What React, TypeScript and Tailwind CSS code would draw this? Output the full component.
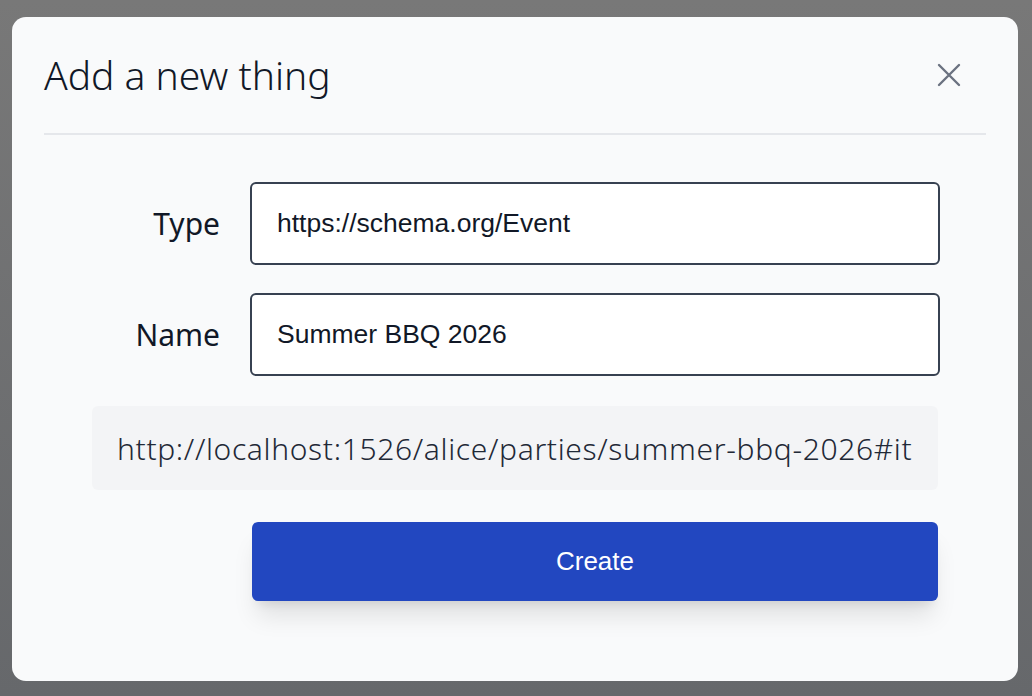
import { useState } from 'react';

const ubuntuLike = "font-['Noto_Sans','Open_Sans',sans-serif]";
const arialLike = "font-['Liberation_Sans',Arial,sans-serif]";

function CloseIcon() {
  return (
    <svg width="24" height="24" viewBox="0 0 24 24" fill="none" stroke="currentColor" strokeWidth="2.4" strokeLinecap="round">
      <path d="M2 2 L22 22 M22 2 L2 22" />
    </svg>
  );
}

function Field({ label, value, onChange }: { label: string; value: string; onChange: (v: string) => void }) {
  return (
    <>
      <label className={`${ubuntuLike} text-right text-[30px] text-[#111827]`}>{label}</label>
      <input
        value={value}
        onChange={e => onChange(e.target.value)}
        className={`${arialLike} h-[83px] w-[calc(100%+2px)] rounded-md border-2 border-[#374151] bg-white px-[25px] text-[26.5px] text-[#111827] outline-none`}
      />
    </>
  );
}

export default function App() {
  const [type, setType] = useState('https://schema.org/Event');
  const [name, setName] = useState('Summer BBQ 2026');

  return (
    <div className="h-[696px] w-[1032px] overflow-hidden bg-gradient-to-b from-[#787878] to-[#66686b] pl-[12px] pt-[17px]">
      <div className="w-[1006px] rounded-[14px] bg-[#f9fafb] px-8 pb-[80px] pt-[30px]">
        <div className="flex h-[56px] items-center justify-between">
          <h1 className={`${ubuntuLike} text-[39px] font-light text-[#111827]`}>Add a new thing</h1>
          <button className="mr-[25px] text-[#6b7280]">
            <CloseIcon />
          </button>
        </div>
        <div className="mt-[30px] h-[2px] bg-[#e5e7eb]" />

        <div className="mx-12 mt-[47px]">
          <div className="grid grid-cols-[128px_1fr] items-center gap-x-[30px] gap-y-[28px]">
            <Field label="Type" value={type} onChange={setType} />
            <Field label="Name" value={name} onChange={setName} />
          </div>

          <div className={`${ubuntuLike} mt-[30px] flex h-[84px] items-center rounded-md bg-[#f3f4f6] px-[25px] text-[30px] font-light tracking-[0.65px] text-[#1f2937]`}>
            http://localhost:1526/alice/parties/summer-bbq-2026#it
          </div>

          <button
            className={`${arialLike} ml-[160px] mt-[32px] h-[79px] w-[686px] rounded-md bg-[#2247c0] text-[26px] text-white shadow-xl`}
          >
            Create
          </button>
        </div>
      </div>
    </div>
  );
}
